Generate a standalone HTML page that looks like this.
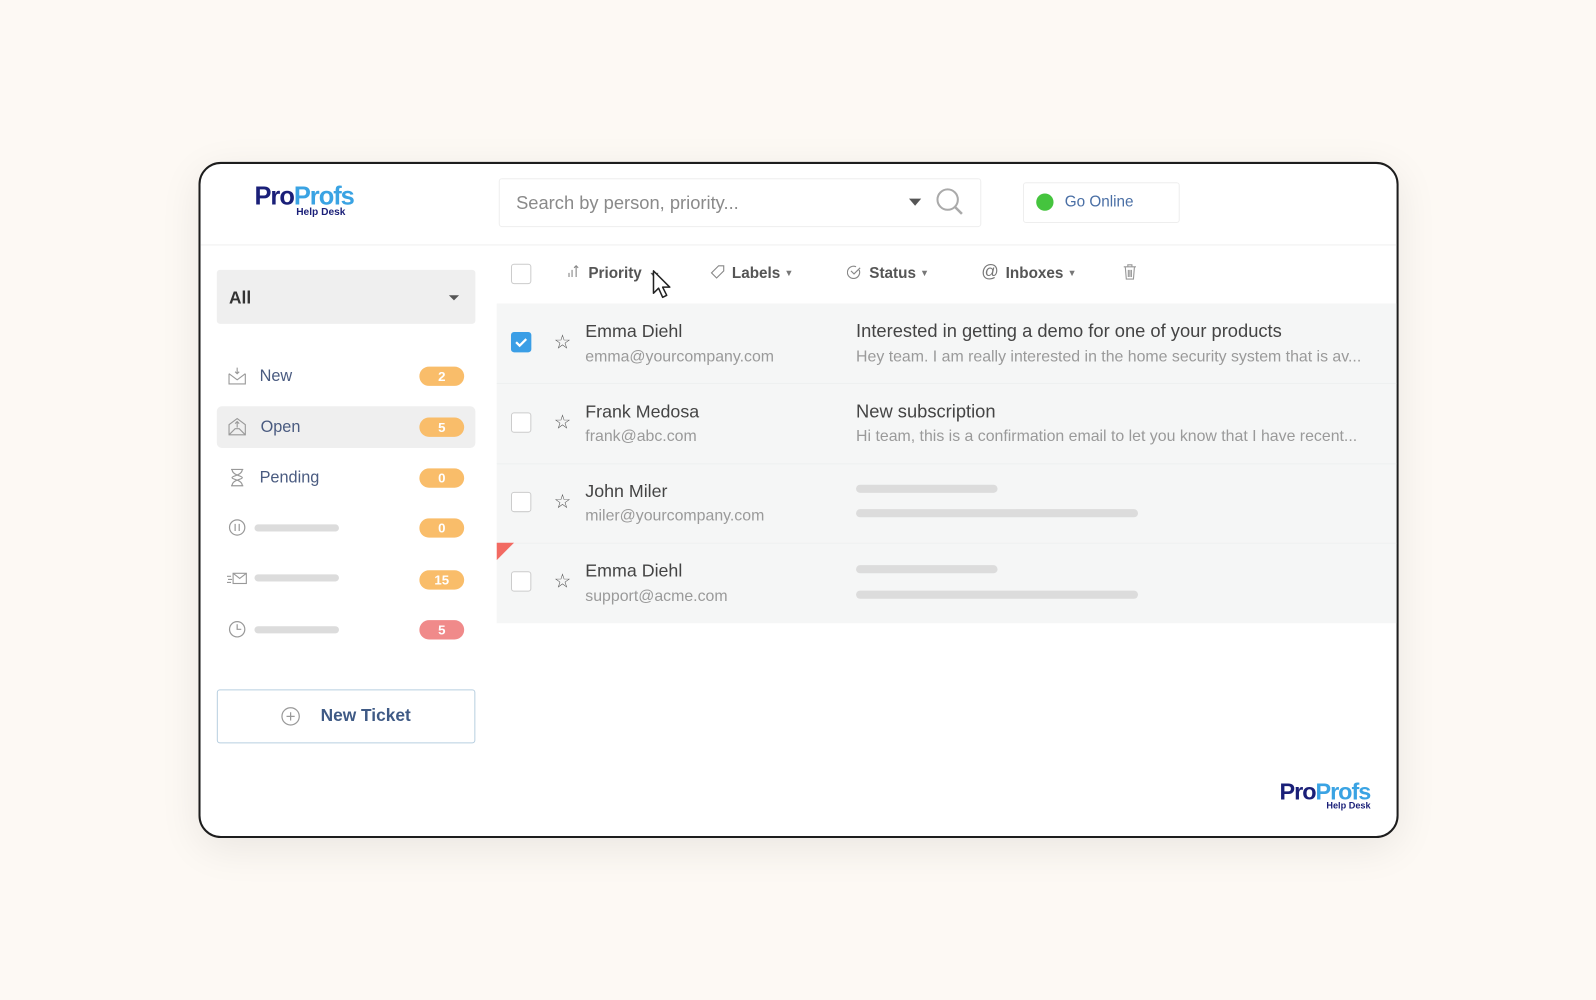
<!DOCTYPE html>
<html><head><meta charset="utf-8"><style>
*{margin:0;padding:0;box-sizing:border-box}
html,body{width:1596px;height:1000px;overflow:hidden;background:#fdf9f4;font-family:"Liberation Sans",sans-serif}
#w{position:absolute;left:0;top:0;width:1568px;height:982px;transform:scale(1.0179,1.0183);transform-origin:0 0}
.a{position:absolute}
.card{left:195px;top:159px;width:1179px;height:664px;border:2px solid #1d1d1d;border-radius:22px;background:#fff;box-shadow:0 10px 40px rgba(0,0,0,.08);overflow:hidden}
.logo{font-weight:bold;letter-spacing:-1px}
.logo .p{color:#1a1f78}.logo .q{color:#3aa3e3}
.hd{font-size:10px;color:#1a1f78;font-weight:bold;letter-spacing:0}
.badge{width:44px;height:19px;border-radius:10px;background:#f9bd6a;color:#fff;font-weight:bold;font-size:13px;text-align:center;line-height:19px}
.it{font-size:16px;color:#4a5b80}
.sk{height:7px;border-radius:4px;background:#dcdcdc}
.cb{width:20px;height:20px;border:1px solid #ccc;border-radius:3px;background:#fff}
.nm{font-size:17.5px;color:#444}
.em{font-size:15.6px;color:#9a9a9a}
.fl{font-size:15px;font-weight:bold;color:#555;top:260px}
.fl small{font-size:9px;color:#777;margin-left:4px;vertical-align:2px}
</style></head><body><div id="w">
<div class="a card"></div>
<div class="a logo" style="left:250px;top:179px;font-size:25px"><span class="p">Pro</span><span class="q">Profs</span></div>
<div class="a hd" style="left:291px;top:203px">Help Desk</div>
<div class="a" style="left:197px;top:240px;width:1175px;height:1px;background:#f0f0f0"></div>
<div class="a" style="left:490px;top:175px;width:474px;height:48px;border:1px solid #eee;border-radius:3px"></div>
<div class="a" style="left:507px;top:189px;font-size:18px;color:#8a8a8a">Search by person, priority...</div>
<div class="a" style="left:893px;top:195px;width:0;height:0;border-left:6px solid transparent;border-right:6px solid transparent;border-top:7px solid #555"></div>
<svg class="a" style="left:918px;top:183px" width="30" height="30" viewBox="0 0 30 30"><circle cx="13" cy="13" r="10" fill="none" stroke="#aaa" stroke-width="2"/><line x1="20.5" y1="20.5" x2="27" y2="27" stroke="#aaa" stroke-width="2.5"/></svg>
<div class="a" style="left:1005px;top:179px;width:154px;height:40px;border:1px solid #eee;border-radius:3px"></div>
<div class="a" style="left:1018px;top:190px;width:17px;height:17px;border-radius:50%;background:#45c43e"></div>
<div class="a" style="left:1046px;top:190px;font-size:15px;color:#4a6fa5">Go Online</div>
<div class="a" style="left:213px;top:265px;width:254px;height:53px;background:#efefef;border-radius:3px"></div>
<div class="a" style="left:225px;top:283px;font-size:17px;font-weight:bold;color:#333">All</div>
<div class="a" style="left:441px;top:290px;width:0;height:0;border-left:5px solid transparent;border-right:5px solid transparent;border-top:5px solid #555"></div>
<div class="a" style="left:213px;top:399px;width:254px;height:41px;background:#efefef;border-radius:5px"></div>
<svg class="a" style="left:223px;top:360px" width="20" height="18" viewBox="0 0 20 18" fill="none" stroke="#999" stroke-width="1.1"><path d="M2 7v10h16V7"/><path d="M2 7l8 6 8-6"/><path d="M10 1v6M8 5l2 2 2-2"/></svg>
<div class="a it" style="left:255px;top:361px">New</div>
<div class="a badge" style="left:412px;top:360px">2</div>
<svg class="a" style="left:223px;top:410px" width="20" height="18" viewBox="0 0 20 18" fill="none" stroke="#999" stroke-width="1.1"><path d="M2 7v10h16V7L10 1z"/><path d="M2 17l6-6h4l6 6"/><path d="M10 4v6M8 6l2-2 2 2"/></svg>
<div class="a it" style="left:256px;top:411px">Open</div>
<div class="a badge" style="left:412px;top:410px">5</div>
<svg class="a" style="left:225px;top:460px" width="16" height="18" viewBox="0 0 16 18" fill="none" stroke="#999" stroke-width="1.2"><path d="M2 1h12M2 17h12M3 1c0 6 10 6 10 8s-10 2-10 8M13 1c0 6-10 6-10 8s10 2 10 8"/></svg>
<div class="a it" style="left:255px;top:461px">Pending</div>
<div class="a badge" style="left:412px;top:460px">0</div>
<svg class="a" style="left:224px;top:509px" width="18" height="18" viewBox="0 0 18 18" fill="none" stroke="#999" stroke-width="1.2"><circle cx="9" cy="9" r="7.5"/><path d="M7 5.5v7M11 5.5v7"/></svg>
<div class="a sk" style="left:250px;top:515px;width:83px"></div>
<div class="a badge" style="left:412px;top:509px">0</div>
<svg class="a" style="left:222px;top:560px" width="22" height="16" viewBox="0 0 22 16" fill="none" stroke="#999" stroke-width="1.1"><rect x="7" y="3" width="13" height="10"/><path d="M7 3l6.5 5 6.5-5M1 6h4M2 9h4M1 12h4"/></svg>
<div class="a sk" style="left:250px;top:564px;width:83px"></div>
<div class="a badge" style="left:412px;top:560px">15</div>
<svg class="a" style="left:224px;top:609px" width="18" height="18" viewBox="0 0 18 18" fill="none" stroke="#999" stroke-width="1.2"><circle cx="9" cy="9" r="7.5"/><path d="M9 4v5h4"/></svg>
<div class="a sk" style="left:250px;top:615px;width:83px"></div>
<div class="a badge" style="left:412px;top:609px;background:#f08a8a">5</div>
<div class="a" style="left:213px;top:677px;width:254px;height:53px;border:1px solid #b8cfe0;border-radius:3px"></div>
<svg class="a" style="left:276px;top:694px" width="19" height="19" viewBox="0 0 19 19" fill="none" stroke="#999" stroke-width="1.2"><circle cx="9.5" cy="9.5" r="8.5"/><path d="M9.5 5.5v8M5.5 9.5h8"/></svg>
<div class="a" style="left:315px;top:693px;font-size:17px;font-weight:bold;color:#3f5a85">New Ticket</div>
<div class="a cb" style="left:502px;top:259px"></div>
<svg class="a" style="left:557px;top:259px" width="14" height="14" viewBox="0 0 14 14" fill="none" stroke="#888" stroke-width="1.1"><path d="M2 13V9M5 13V6M9 13V2M7 4l2-2 2 2"/></svg>
<div class="a fl" style="left:578px">Priority</div>
<div class="a" style="left:639px;top:268px;width:0;height:0;border-left:4px solid transparent;border-right:4px solid transparent;border-top:5px solid #555"></div>
<svg class="a" style="left:640px;top:264px" width="22" height="30" viewBox="0 0 22 30"><path d="M2 2v22l5-5 4 9 4-2-4-8h7z" fill="#fff" stroke="#222" stroke-width="1.5" stroke-linejoin="round"/></svg>
<svg class="a" style="left:698px;top:260px" width="14" height="14" viewBox="0 0 14 14" fill="none" stroke="#888" stroke-width="1.1"><path d="M8 1h5v5l-7 7-5-5z"/></svg>
<div class="a fl" style="left:719px">Labels<small>▼</small></div>
<svg class="a" style="left:832px;top:260px" width="14" height="14" viewBox="0 0 14 14" fill="none" stroke="#888" stroke-width="1.1"><path d="M12 5a6 6 0 1 1-3-3"/><path d="M4 6l3 3 6-6"/></svg>
<div class="a fl" style="left:854px">Status<small>▼</small></div>
<div class="a" style="left:964px;top:257px;font-size:17px;color:#777">@</div>
<div class="a fl" style="left:988px">Inboxes<small>▼</small></div>
<svg class="a" style="left:1103px;top:259px" width="14" height="16" viewBox="0 0 14 16" fill="none" stroke="#999" stroke-width="1.1"><path d="M1 3h12M5 3V1h4v2M2.5 3l1 12h7l1-12M5.5 6v7M7 6v7M8.5 6v7"/></svg>
<div class="a" style="left:488px;top:298px;width:884px;height:314px;background:#f5f6f6"></div>
<div class="a" style="left:488px;top:376px;width:884px;height:1px;background:#eef0f0"></div>
<div class="a" style="left:488px;top:455px;width:884px;height:1px;background:#eef0f0"></div>
<div class="a" style="left:488px;top:533px;width:884px;height:1px;background:#eef0f0"></div>
<div class="a" style="left:502px;top:326px;width:20px;height:20px;border-radius:3px;background:#3a9ee6"></div>
<svg class="a" style="left:502px;top:326px" width="20" height="20" viewBox="0 0 20 20"><path d="M5 10l3.5 3.5L15 7" fill="none" stroke="#fff" stroke-width="2.2"/></svg>
<div class="a cb" style="left:502px;top:405px"></div>
<div class="a cb" style="left:502px;top:483px"></div>
<div class="a cb" style="left:502px;top:561px"></div>
<div class="a" style="left:544px;top:325px;font-size:19px;color:#555">☆</div>
<div class="a" style="left:544px;top:404px;font-size:19px;color:#555">☆</div>
<div class="a" style="left:544px;top:482px;font-size:19px;color:#555">☆</div>
<div class="a" style="left:544px;top:560px;font-size:19px;color:#555">☆</div>
<div class="a nm" style="left:575px;top:315px">Emma Diehl</div>
<div class="a em" style="left:575px;top:342px">emma@yourcompany.com</div>
<div class="a nm" style="left:575px;top:394px">Frank Medosa</div>
<div class="a em" style="left:575px;top:420px">frank@abc.com</div>
<div class="a nm" style="left:575px;top:472px">John Miler</div>
<div class="a em" style="left:575px;top:498px">miler@yourcompany.com</div>
<div class="a nm" style="left:575px;top:550px">Emma Diehl</div>
<div class="a em" style="left:575px;top:577px">support@acme.com</div>
<div class="a nm" style="left:841px;top:315px;font-size:18px">Interested in getting a demo for one of your products</div>
<div class="a em" style="left:841px;top:342px;width:524px;white-space:nowrap;overflow:hidden">Hey team. I am really interested in the home security system that is av...</div>
<div class="a nm" style="left:841px;top:394px;font-size:18px">New subscription</div>
<div class="a em" style="left:841px;top:420px;width:524px;white-space:nowrap;overflow:hidden">Hi team, this is a confirmation email to let you know that I have recent...</div>
<div class="a sk" style="left:841px;top:476px;width:139px;height:8px"></div>
<div class="a sk" style="left:841px;top:500px;width:277px;height:8px"></div>
<div class="a sk" style="left:841px;top:555px;width:139px;height:8px"></div>
<div class="a sk" style="left:841px;top:580px;width:277px;height:8px"></div>
<div class="a" style="left:488px;top:533px;width:0;height:0;border-top:17px solid #f26a62;border-right:17px solid transparent"></div>
<div class="a logo" style="left:1257px;top:764px;font-size:23px"><span class="p">Pro</span><span class="q">Profs</span></div>
<div class="a hd" style="left:1303px;top:786px;font-size:9px">Help Desk</div>
</div></body></html>
